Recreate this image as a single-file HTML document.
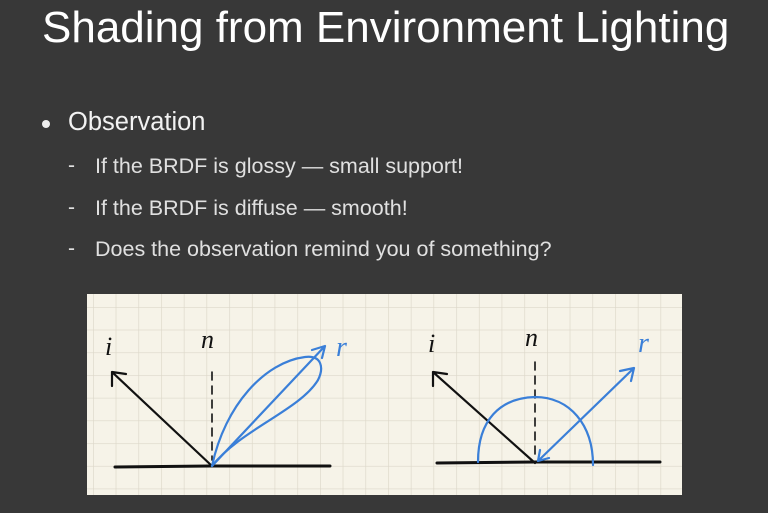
<!DOCTYPE html>
<html><head><style>
html,body{margin:0;padding:0}
body{width:768px;height:513px;background:#383838;position:relative;overflow:hidden;font-family:"Liberation Sans",sans-serif}
.t{position:absolute;left:42px;top:3px;font-size:44px;color:#fff;white-space:nowrap}
.b{position:absolute;left:68px;top:108px;font-size:25.5px;color:#f2f2f2}
.dot{position:absolute;left:42px;top:120px;width:8px;height:8px;border-radius:50%;background:#eee}
.s{position:absolute;left:95px;font-size:21.5px;color:#e0e0e0;white-space:nowrap}
.d{position:absolute;left:68px;font-size:21px;color:#e0e0e0}
</style></head><body>
<div class="t">Shading from Environment Lighting</div>
<div class="dot"></div>
<div class="b">Observation</div>
<div class="d" style="top:154px">-</div><div class="s" style="top:154px">If the BRDF is glossy — small support!</div>
<div class="d" style="top:196px">-</div><div class="s" style="top:196px">If the BRDF is diffuse — smooth!</div>
<div class="d" style="top:237px">-</div><div class="s" style="top:237px">Does the observation remind you of something?</div>
<svg style="position:absolute;left:0;top:0" width="768" height="513">
<defs><pattern id="g" x="93" y="307" width="22.7" height="22.7" patternUnits="userSpaceOnUse"><path d="M0 0H22.7M0 0V22.7" stroke="#dcd7c9" stroke-width="1.3" fill="none"/></pattern></defs>
<rect x="87" y="294" width="595" height="201" fill="#f6f3e8"/>
<rect x="87" y="294" width="595" height="201" fill="url(#g)"/>
<g fill="none" stroke-linecap="round" stroke-linejoin="round">
<path d="M115 467 L210 466 L330 466" stroke="#111" stroke-width="3"/>
<path d="M212 466 L112 372 M112 372 L112 386 M112 372 L126 374" stroke="#111" stroke-width="2.2"/>
<path d="M212 372 V460" stroke="#111" stroke-width="1.6" stroke-dasharray="8 6"/>
<path d="M212 466 L325 346 M325 346 L312 350 M325 346 L322 358" stroke="#3a7fd8" stroke-width="2.2"/>
<path d="M212 466 C225 405 265 362 305 357 C322 355 324 368 318 380 C300 410 240 430 212 466 Z" stroke="#3a7fd8" stroke-width="2.2"/>
<text x="105" y="355" font-family="Liberation Serif,serif" font-style="italic" font-size="26" fill="#111" stroke="none">i</text>
<text x="201" y="348" font-family="Liberation Serif,serif" font-style="italic" font-size="26" fill="#111" stroke="none">n</text>
<text x="336" y="356" font-family="Liberation Serif,serif" font-style="italic" font-size="28" fill="#3a7fd8" stroke="none">r</text>
<path d="M437 463 L535 462 L660 462" stroke="#111" stroke-width="3"/>
<path d="M535 463 L433 372 M433 372 L433 386 M433 372 L447 374" stroke="#111" stroke-width="2.2"/>
<path d="M535 362 V460" stroke="#111" stroke-width="1.6" stroke-dasharray="8 6"/>
<path d="M538 461 L634 368 M634 368 L620 371 M634 368 L631 381 M538 461 L540 450 M538 461 L549 458" stroke="#3a7fd8" stroke-width="2.2"/>
<path d="M478 462 C478 420 500 398 535 397 C570 397 593 425 593 465" stroke="#3a7fd8" stroke-width="2.2"/>
<text x="428" y="352" font-family="Liberation Serif,serif" font-style="italic" font-size="26" fill="#111" stroke="none">i</text>
<text x="525" y="346" font-family="Liberation Serif,serif" font-style="italic" font-size="26" fill="#111" stroke="none">n</text>
<text x="638" y="352" font-family="Liberation Serif,serif" font-style="italic" font-size="28" fill="#3a7fd8" stroke="none">r</text>
</g>
</svg>
</body></html>
